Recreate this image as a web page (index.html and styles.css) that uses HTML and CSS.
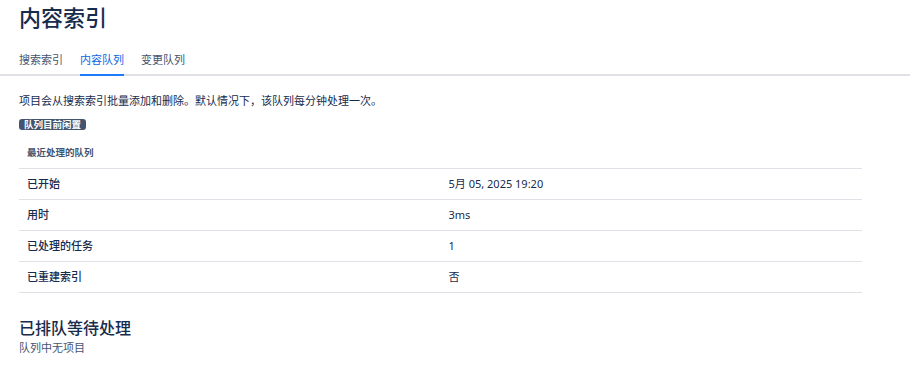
FILE: index.html
```html
<!DOCTYPE html>
<html lang="zh-CN">
<head>
    <meta charset="UTF-8">
    <title>内容索引</title>
    <link rel="stylesheet" href="styles.css">
</head>
<body>
    <h1 class="page-title">内容索引</h1>

    <nav class="tabs">
        <a class="tab">搜索索引</a>
        <a class="tab active">内容队列</a>
        <a class="tab">变更队列</a>
    </nav>

    <div class="content">
        <p class="desc">项目会从搜索索引批量添加和删除。默认情况下，该队列每分钟处理一次。</p>
        <span class="badge">队列目前闲置</span>

        <table class="queue-table">
            <thead>
                <tr><th colspan="2">最近处理的队列</th></tr>
            </thead>
            <tbody>
                <tr><td class="label">已开始</td><td>5月 05, 2025 19:20</td></tr>
                <tr><td class="label">用时</td><td>3ms</td></tr>
                <tr><td class="label">已处理的任务</td><td>1</td></tr>
                <tr><td class="label">已重建索引</td><td>否</td></tr>
            </tbody>
        </table>

        <h2 class="section-title">已排队等待处理</h2>
        <p class="empty">队列中无项目</p>
    </div>
</body>
</html>
```

FILE: styles.css
```css
body {
    margin: 0;
    font-family: "Noto Sans", "Noto Sans CJK SC", sans-serif;
    font-size: 11px;
    color: #172b4d;
    background-color: #fff;
}

.page-title {
    margin: 4px 0 0;
    padding: 0 19px;
    font-size: 22px;
    line-height: 26px;
    font-weight: 500;
    color: #172b4d;
}

.tabs {
    display: flex;
    gap: 17px;
    margin-top: 14px;
    padding: 0 19px;
    border-bottom: 2px solid #dfe1e6;
}

.tab {
    padding: 8px 0 6px;
    line-height: 16px;
    color: #44546f;
    border-bottom: 2px solid transparent;
    margin-bottom: -2px;
}

.tab.active {
    color: #0c66e4;
    border-bottom-color: #1d7afc;
}

.content {
    padding: 0 19px;
}

.desc {
    margin: 17px 0 0;
    line-height: 16px;
}

.badge {
    display: inline-block;
    margin-top: 10px;
    padding: 0 5px;
    font-size: 9.5px;
    line-height: 11px;
    font-weight: 700;
    color: #fff;
    background-color: #44546f;
    border-radius: 3px;
}

.queue-table {
    width: 843px;
    margin-top: 7px;
    border-collapse: collapse;
}

.queue-table th {
    text-align: left;
    padding: 7px 8px;
    font-size: 9.5px;
    line-height: 16px;
    font-weight: 700;
    color: #44546f;
    border-bottom: 1px solid #dfe1e6;
}

.queue-table td {
    width: 50%;
    padding: 7px 8px;
    line-height: 16px;
    border-bottom: 1px solid #dfe1e6;
}

.queue-table td.label {
    font-weight: 500;
}

.section-title {
    margin: 23px 0 0;
    font-size: 16px;
    line-height: 24px;
    font-weight: 500;
}

.empty {
    margin: 0;
    line-height: 16px;
    color: #44546f;
}
```
